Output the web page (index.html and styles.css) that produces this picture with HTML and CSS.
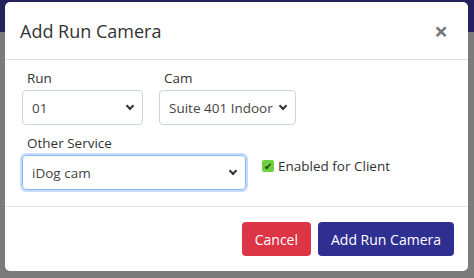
FILE: index.html
```html
<!DOCTYPE html>
<html lang="en">

<head>
    <meta charset="UTF-8">
    <meta name="viewport" content="width=device-width, initial-scale=1.0">
    <title>Add Run Camera</title>
    <link rel="stylesheet" href="styles.css">
</head>

<body>
    <div class="modal">
        <div class="modal__header">
            <h5 class="modal__title">Add Run Camera</h5>
            <span class="modal__close">&times;</span>
        </div>
        <div class="modal__body">
            <div class="row">
                <div class="field field--run">
                    <label class="field__label">Run</label>
                    <div class="select"><span>01</span><i class="chev"></i></div>
                </div>
                <div class="field field--cam">
                    <label class="field__label">Cam</label>
                    <div class="select"><span>Suite 401 Indoor</span><i class="chev"></i></div>
                </div>
            </div>
            <div class="row row--second">
                <div class="field field--service">
                    <label class="field__label">Other Service</label>
                    <div class="select select--focus"><span>iDog cam</span><i class="chev"></i></div>
                </div>
                <label class="check"><span class="check__box">&#10004;</span> Enabled for Client</label>
            </div>
        </div>
        <div class="modal__footer">
            <button class="btn btn--danger">Cancel</button>
            <button class="btn btn--primary">Add Run Camera</button>
        </div>
    </div>
</body>

</html>
```

FILE: styles.css
```css
body {
    margin: 0;
    height: 278px;
    overflow: hidden;
    font-family: "Open Sans", "Liberation Sans", sans-serif;
    color: #212529;
    background: linear-gradient(to bottom, #25215c 0, #25215c 32px, #7b7b7b 32px);
}

.modal {
    margin: 2px 6px 0 5px;
    height: 269px;
    background: #fff;
    border-radius: 5px;
    display: flex;
    flex-direction: column;
}

.modal__header {
    display: flex;
    align-items: center;
    justify-content: space-between;
    height: 57px;
    padding: 0 20px 0 15px;
    border-bottom: 1px solid #e3e3e3;
    flex: none;
}

.modal__title {
    margin: 0;
    font-size: 18px;
    font-weight: 500;
    color: #333;
}

.modal__close {
    font-size: 24px;
    font-weight: 700;
    color: #777;
    line-height: 1;
}

.modal__body {
    height: 147px;
    box-sizing: border-box;
    padding: 9px 17px 0 17px;
    border-bottom: 1px solid #e3e3e3;
    flex: none;
}

.row {
    display: flex;
    align-items: center;
    gap: 16px;
}

.row--second {
    margin-top: 9px;
}

.field {
    display: flex;
    flex-direction: column;
}

.field__label {
    font-size: 13.5px;
    color: #333;
    margin: 0 0 3px 5px;
    line-height: 18px;
}

.field--run { width: 121px; }
.field--cam { width: 137px; }
.field--service { width: 224px; }

.select {
    height: 33px;
    border: 1px solid #cfd4d9;
    border-radius: 4px;
    display: flex;
    align-items: center;
    justify-content: space-between;
    gap: 4px;
    padding: 0 9px 0 9px;
    font-size: 13.5px;
    color: #444;
    white-space: nowrap;
    overflow: hidden;
}

.select--focus {
    border-color: #86b7fe;
    box-shadow: 0 0 0 2px #c7dbfb;
}

.chev {
    flex: none;
    width: 4px;
    height: 4px;
    border-right: 2px solid #333;
    border-bottom: 2px solid #333;
    transform: rotate(45deg);
    margin-top: -3px;
}

.check {
    display: flex;
    align-items: center;
    gap: 4px;
    font-size: 13.5px;
    color: #333;
    margin-top: 8px;
}

.check__box {
    width: 12px;
    height: 12px;
    background: #6fcf3f;
    color: #1b3a10;
    font-size: 10px;
    line-height: 12px;
    text-align: center;
    border-radius: 2px;
}

.modal__footer {
    flex: 1;
    display: flex;
    align-items: center;
    justify-content: flex-end;
    gap: 7px;
    padding: 0 14px 0 0;
}

.btn {
    height: 34px;
    border: none;
    border-radius: 4px;
    color: #fff;
    font-family: inherit;
    font-size: 14px;
    padding: 0 13px;
}

.btn--danger { background: #dc3545; }
.btn--primary { background: #2f2f91; }
```
